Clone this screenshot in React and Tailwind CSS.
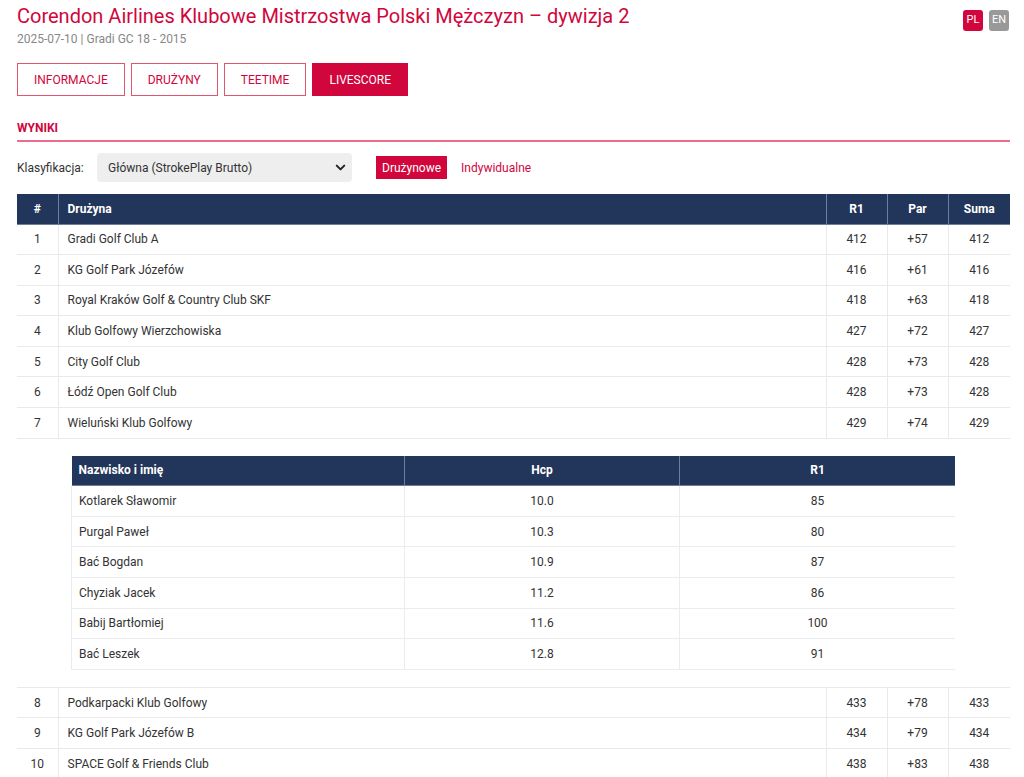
import React from "react";
import { ChevronDown } from "lucide-react";

const teams = [
  ["1", "Gradi Golf Club A", "412", "+57", "412"],
  ["2", "KG Golf Park Józefów", "416", "+61", "416"],
  ["3", "Royal Kraków Golf & Country Club SKF", "418", "+63", "418"],
  ["4", "Klub Golfowy Wierzchowiska", "427", "+72", "427"],
  ["5", "City Golf Club", "428", "+73", "428"],
  ["6", "Łódź Open Golf Club", "428", "+73", "428"],
  ["7", "Wieluński Klub Golfowy", "429", "+74", "429"],
];

const moreTeams = [
  ["8", "Podkarpacki Klub Golfowy", "433", "+78", "433"],
  ["9", "KG Golf Park Józefów B", "434", "+79", "434"],
  ["10", "SPACE Golf & Friends Club", "438", "+83", "438"],
];

const players = [
  ["Kotlarek Sławomir", "10.0", "85"],
  ["Purgal Paweł", "10.3", "80"],
  ["Bać Bogdan", "10.9", "87"],
  ["Chyziak Jacek", "11.2", "86"],
  ["Babij Bartłomiej", "11.6", "100"],
  ["Bać Leszek", "12.8", "91"],
];

function TeamRow({ row }) {
  const [pos, name, r1, par, sum] = row;
  return (
    <tr className="h-[30.6px] border-t border-[#e9e9e9]">
      <td className="border-r border-[#e9e9e9] text-center">{pos}</td>
      <td className="px-[9px]">{name}</td>
      <td className="border-l border-[#e9e9e9] text-center">{r1}</td>
      <td className="border-l border-[#e9e9e9] text-center">{par}</td>
      <td className="border-l border-[#e9e9e9] text-center">{sum}</td>
    </tr>
  );
}

export default function App() {
  return (
    <div className="min-h-screen bg-white pl-[17px] pr-[14px] pt-[4px] text-[12px] text-[#333] [font-family:Roboto,'Noto_Sans',sans-serif]">
      <div className="flex items-start justify-between">
        <div>
          <h1 className="text-[20px] leading-[24px] text-[#d0063d]">
            Corendon Airlines Klubowe Mistrzostwa Polski Mężczyzn – dywizja 2
          </h1>
          <p className="mt-[2px] text-[12px] text-[#888]">2025-07-10 | Gradi GC 18 - 2015</p>
        </div>
        <div className="mt-[6px] flex gap-[6px] pr-[1px]">
          <span className="flex h-[21px] w-[20px] items-center justify-center rounded-[3px] bg-[#d0063d] text-[11px] text-white">PL</span>
          <span className="flex h-[21px] w-[20px] items-center justify-center rounded-[3px] bg-[#999] text-[11px] text-white">EN</span>
        </div>
      </div>

      <div className="mt-[15px] flex gap-[6px]">
        {["INFORMACJE", "DRUŻYNY", "TEETIME"].map((t) => (
          <button
            key={t}
            type="button"
            className="h-[33px] border border-[#e0566f] px-[16px] text-[12px] text-[#d0063d]"
          >
            {t}
          </button>
        ))}
        <button type="button" className="h-[33px] bg-[#d0063d] px-[17px] text-[12px] text-white">
          LIVESCORE
        </button>
      </div>

      <div className="mt-[23px] border-b-2 border-[#ec6d8b] pb-[3px] text-[12px] font-bold text-[#d0063d]">
        WYNIKI
      </div>

      <div className="mt-[11px] flex items-center">
        <span className="w-[80px]">Klasyfikacja:</span>
        <div className="relative flex h-[29px] w-[255px] items-center rounded-[4px] bg-[#eeeeee] pl-[11px]">
          <span>Główna (StrokePlay Brutto)</span>
          <ChevronDown className="absolute right-[4px] h-[15px] w-[15px] text-[#222]" strokeWidth={3.2} />
        </div>
        <span className="ml-[24px] flex h-[23px] items-center bg-[#d0063d] px-[6px] text-white">Drużynowe</span>
        <span className="ml-[14px] text-[#d0063d]">Indywidualne</span>
      </div>

      <table className="mt-[12px] w-full border-collapse">
        <thead>
          <tr className="h-[30px] border-b border-[#6e7f99] bg-[#22355a] font-bold text-white">
            <th className="w-[41px] border-r border-[#6e7f99] text-center">#</th>
            <th className="px-[9px] text-left">Drużyna</th>
            <th className="w-[61px] border-l border-[#6e7f99] text-center">R1</th>
            <th className="w-[61px] border-l border-[#6e7f99] text-center">Par</th>
            <th className="w-[62px] border-l border-[#6e7f99] text-center">Suma</th>
          </tr>
        </thead>
        <tbody>
          {teams.map((r) => (
            <TeamRow key={r[0]} row={r} />
          ))}
          <tr className="border-t border-[#e9e9e9]">
            <td colSpan={5} className="pb-[17px] pl-[54px] pr-[55px] pt-[17px]">
              <table className="w-full border-collapse">
                <thead>
                  <tr className="h-[30px] border-b border-[#6e7f99] bg-[#22355a] font-bold text-white">
                    <th className="w-[333px] px-[7px] text-left">Nazwisko i imię</th>
                    <th className="w-[275px] border-l border-[#6e7f99] text-center">Hcp</th>
                    <th className="border-l border-[#6e7f99] text-center">R1</th>
                  </tr>
                </thead>
                <tbody>
                  {players.map(([n, h, r]) => (
                    <tr key={n} className="h-[30.6px] border-b border-[#ececec]">
                      <td className="border-l border-[#ececec] px-[7px]">{n}</td>
                      <td className="border-l border-[#ececec] text-center">{h}</td>
                      <td className="border-l border-[#ececec] text-center">{r}</td>
                    </tr>
                  ))}
                </tbody>
              </table>
            </td>
          </tr>
          {moreTeams.map((r) => (
            <TeamRow key={r[0]} row={r} />
          ))}
        </tbody>
      </table>
    </div>
  );
}
